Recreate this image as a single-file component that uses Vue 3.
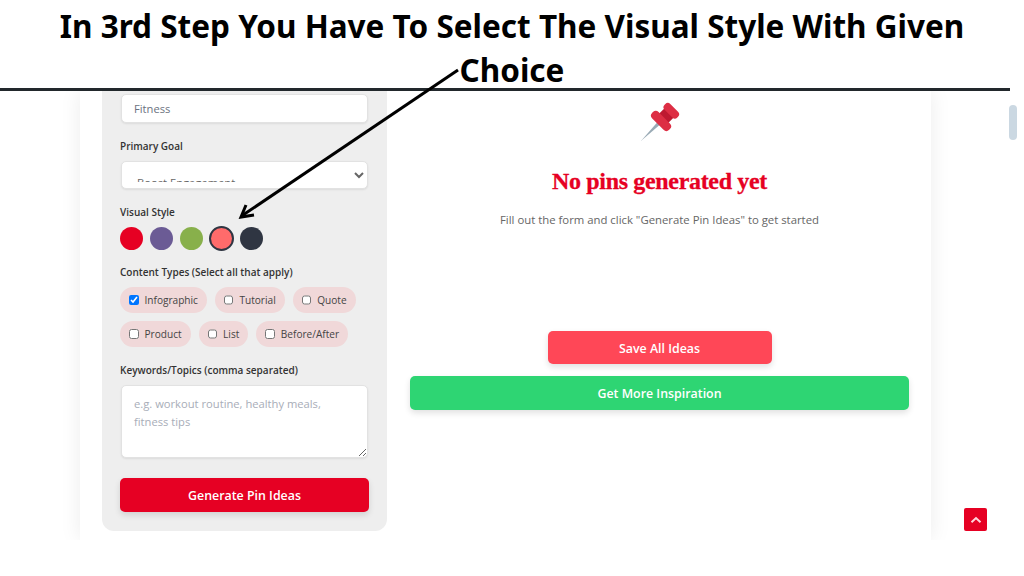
<template>
  <div class="page">
    <h1 class="title">In 3rd Step You Have To Select The Visual Style With Given Choice</h1>
    <div class="rule"></div>

    <div class="shot">
      <main class="card">
        <form class="panel" @submit.prevent>
          <input class="field" type="text" value="Fitness" />

          <label class="label goal-label">Primary Goal</label>
          <select class="field goal">
            <option>Boost Engagement</option>
          </select>

          <label class="label style-label">Visual Style</label>
          <div class="swatches">
            <span
              v-for="color in colors"
              :key="color"
              :class="['swatch', { active: color === activeColor }]"
              :style="{ background: color }"
            ></span>
          </div>

          <label class="label types-label">Content Types (Select all that apply)</label>
          <div class="types">
            <label v-for="type in types" :key="type" class="pill">
              <input type="checkbox" :checked="type === 'Infographic'" />
              {{ type }}
            </label>
          </div>

          <label class="label keywords-label">Keywords/Topics (comma separated)</label>
          <textarea class="field keywords" placeholder="e.g. workout routine, healthy meals, fitness tips"></textarea>

          <button class="btn generate" type="button">Generate Pin Ideas</button>
        </form>

        <section class="results">
          <svg class="pin" width="40" height="40" viewBox="0 0 40 40">
            <g transform="rotate(45 20 20)">
              <path d="M18.2 22h3.600L20 47z" fill="#99aab5" />
              <rect x="13.500" y="6" width="13" height="10" fill="#be1931" />
              <rect x="11" y="0" width="18" height="8" rx="3.500" fill="#dd2e44" />
              <rect x="8" y="14" width="24" height="9" rx="4" fill="#dd2e44" />
            </g>
          </svg>
          <h2 class="empty-title">No pins generated yet</h2>
          <p class="empty-text">Fill out the form and click "Generate Pin Ideas" to get started</p>
          <button class="btn save" type="button">Save All Ideas</button>
          <button class="btn more" type="button">Get More Inspiration</button>
        </section>
      </main>
    </div>

    <!-- canva style annotation over the screenshot -->
    <svg class="arrow" width="1024" height="576" viewBox="0 0 1024 576">
      <path d="M458 70L243 215" stroke="#000" stroke-width="3" fill="none" />
      <path d="M246 205L241 217L254 215" stroke="#000" stroke-width="3" fill="none" />
    </svg>

    <div class="scroll-thumb"></div>
    <button class="to-top" type="button">
      <svg width="12" height="8" viewBox="0 0 12 8">
        <path d="M1.500 6.200L6 2l4.500 4.200" stroke="#ffd5dc" stroke-width="2" fill="none" />
      </svg>
    </button>
  </div>
</template>

<script setup>
const colors = ['#e60023', '#6b5b95', '#88b04b', '#ff6b6b', '#2f3542']
const activeColor = '#ff6b6b'
const types = ['Infographic', 'Tutorial', 'Quote', 'Product', 'List', 'Before/After']
</script>

<style>
body {
  margin: 0;
  background: #fff;
}
</style>

<style scoped>
.page {
  position: relative;
  width: 1024px;
  height: 576px;
  overflow: hidden;
  background: #fff;
  font-family: "Open Sans", "Noto Sans", sans-serif;
}

.title {
  box-sizing: border-box;
  height: 88px;
  margin: 0;
  padding: 4px 50px 0;
  font-family: "Noto Sans", sans-serif;
  font-size: 31.5px;
  font-weight: 700;
  line-height: 44px;
  text-align: center;
  color: #000;
}

.rule {
  width: 1010px;
  height: 3px;
  background: #22282c;
}

.shot {
  height: 449px;
  overflow: hidden;
}

.card {
  display: flex;
  gap: 23px;
  box-sizing: border-box;
  width: 851px;
  height: 449px;
  margin-left: 80px;
  padding: 0 22px;
  background: #fff;
  box-shadow: 0 0 20px rgba(0, 0, 0, 0.08);
}

.panel {
  box-sizing: border-box;
  display: flex;
  flex-direction: column;
  width: 285px;
  height: 440px;
  padding: 3px 18px 0;
  background: #eee;
  border-radius: 0 0 12px 12px;
}

.field {
  box-sizing: border-box;
  width: 247px;
  margin-left: 1px;
  border: 1px solid #e2e2e2;
  border-radius: 5px;
  background: #fff;
  font-family: inherit;
  font-size: 11.2px;
  color: #6b7280;
  box-shadow: 0 1px 2px rgba(0, 0, 0, 0.08);
  outline: none;
}

input.field {
  height: 29px;
  padding: 0 12px;
}

.label {
  display: block;
  height: 14px;
  font-size: 10px;
  font-weight: 600;
  line-height: 14px;
  color: #333;
}

.goal-label {
  margin-top: 16px;
}

.goal {
  height: 28px;
  margin-top: 8px;
  padding: 12px 14px 6px 11px;
  color: #666;
}

.style-label {
  margin-top: 16px;
}

.swatches {
  display: flex;
  align-items: center;
  gap: 7px;
  height: 25px;
  margin-top: 7px;
}

.swatch {
  box-sizing: border-box;
  width: 23px;
  height: 23px;
  border-radius: 50%;
}

.swatch.active {
  width: 25px;
  height: 25px;
  margin: 0 -1px;
  border: 2px solid #2f3542;
}

.types-label {
  margin-top: 14px;
}

.types {
  display: flex;
  flex-wrap: wrap;
  gap: 8px;
  margin-top: 8px;
}

.pill {
  display: flex;
  align-items: center;
  gap: 6px;
  box-sizing: border-box;
  height: 26px;
  padding: 0 9px;
  border-radius: 13px;
  background: #f0d8d9;
  font-size: 10.1px;
  color: #444;
}

.pill input {
  width: 9.500px;
  height: 9.500px;
  margin: 0;
}

.keywords-label {
  margin-top: 16px;
}

.keywords {
  height: 73px;
  margin-top: 8px;
  padding: 9px 12px;
  line-height: 18px;
  resize: vertical;
}

.keywords::placeholder {
  color: #a8adb8;
}

.btn {
  display: block;
  box-sizing: border-box;
  border: 0;
  border-radius: 5px;
  font-family: inherit;
  font-size: 12.400px;
  font-weight: 600;
  color: #fff;
  box-shadow: 0 3px 6px rgba(0, 0, 0, 0.12);
}

.generate {
  width: 249px;
  height: 34px;
  margin-top: 20px;
  background: #e60023;
}

.results {
  display: flex;
  flex-direction: column;
  align-items: center;
  width: 499px;
}

.pin {
  margin-top: 11px;
  overflow: visible;
}

.empty-title {
  margin: 24px 0 0;
  font-family: "Liberation Serif", serif;
  font-size: 24px;
  font-weight: 700;
  line-height: 30px;
  letter-spacing: -0.33px;
  color: #e60023;
  -webkit-text-stroke: 0.3px #e60023;
}

.empty-text {
  margin: 16px 0 0;
  font-size: 11.35px;
  line-height: 16px;
  color: #666;
}

.save {
  width: 224px;
  height: 33px;
  margin-top: 103px;
  padding-top: 2px;
  background: #ff4757;
}

.more {
  width: 499px;
  height: 34px;
  margin-top: 12px;
  background: #2ed573;
}

.arrow {
  position: absolute;
  top: 0;
  left: 0;
  pointer-events: none;
}

.scroll-thumb {
  position: absolute;
  top: 105px;
  left: 1009px;
  width: 8px;
  height: 35px;
  border-radius: 4px;
  background: #cbd8e2;
}

.to-top {
  position: absolute;
  top: 508px;
  left: 964px;
  display: flex;
  align-items: center;
  justify-content: center;
  width: 23px;
  height: 23px;
  padding: 0;
  border: 0;
  border-radius: 2px;
  background: #e60023;
}
</style>
